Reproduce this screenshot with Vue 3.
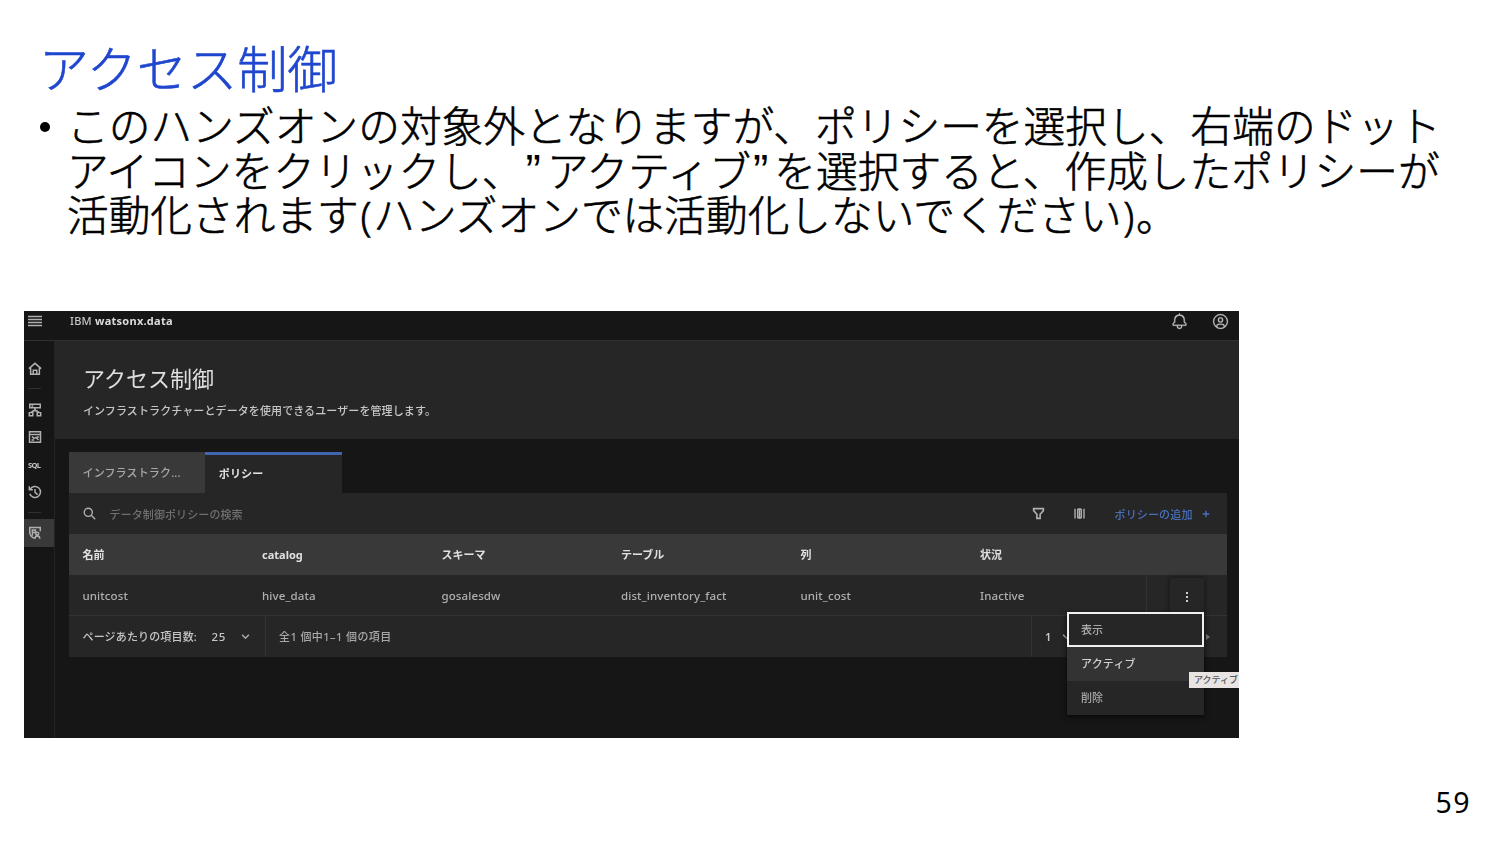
<template>
  <main class="slide">
    <h1 class="slide-title">アクセス制御</h1>
    <div class="bullet">
      <span class="dot"></span>
      <p class="bullet-text">
        <span class="line l1">このハンズオンの対象外となりますが、ポリシーを選択し、右端のドット</span>
        <span class="line l2">アイコンをクリックし、<i class="q">”</i>アクティブ<i class="q">”</i>を選択すると、作成したポリシーが</span>
        <span class="line l3">活動化されます<i class="p">(</i>ハンズオンでは活動化しないでください<i class="p">)</i>。</span>
      </p>
    </div>

    <section class="capture">
      <div class="console">
        <header class="topbar">
          <svg class="menu" viewBox="0 0 14 12"><path d="M0 1.500h14M0 4.500h14M0 7.500h14M0 10.500h14" /></svg>
          <span class="brand"><span class="ibm">IBM</span> <b>watsonx.data</b></span>
          <svg class="icon bell" viewBox="0 0 32 32"><path d="M28.7 19.3L26 16.600V13a10 10 0 0 0-9-9.950V1h-2v2.050A10 10 0 0 0 6 13v3.600l-2.700 2.700A1 1 0 0 0 3 20v3a1 1 0 0 0 1 1h7v1a5 5 0 0 0 10 0v-1h7a1 1 0 0 0 1-1v-3a1 1 0 0 0-.3-.7zM19 25a3 3 0 0 1-6 0v-1h6zm8-3H5v-1.600l2.700-2.700A1 1 0 0 0 8 17v-4a8 8 0 0 1 16 0v4a1 1 0 0 0 .3.7l2.700 2.700z" /></svg>
          <svg class="icon user" viewBox="0 0 32 32"><path fill-rule="evenodd" d="M16 8a5 5 0 1 0 5 5a5 5 0 0 0-5-5zm0 8a3 3 0 1 1 3-3a3 3 0 0 1-3 3z" /><path fill-rule="evenodd" d="M16 2a14 14 0 1 0 14 14A14 14 0 0 0 16 2zm-6 24.400V25a3 3 0 0 1 3-3h6a3 3 0 0 1 3 3v1.400a12 12 0 0 1-12 0zm14-1.500A5 5 0 0 0 19 20h-6a5 5 0 0 0-5 4.900a12 12 0 1 1 16 0z" /></svg>
        </header>

        <div class="body">
          <nav class="side">
            <span class="nav home"><svg viewBox="0 0 16 16"><path d="M1 7.500L8 1.500l7 6M3 6.500V14h10V6.500M6 14V9.500h4V14" /></svg></span>
            <span class="sep"></span>
            <span class="nav"><svg viewBox="0 0 16 16"><path d="M2 1.500h12v4H2zM4 3.500h2M8 5.500v4M8 8L3 11M8 8l5 3M5 9h6M1.500 11h4v3.500h-4zM10.500 11h4v3.500h-4z" /></svg></span>
            <span class="nav"><svg viewBox="0 0 16 16"><path d="M1.700 2h12.600v12H1.700zM2 5.200h12M4.500 7.500l2.500 2 2-1 3 3M4 11.500h3M10 8h2.500" /></svg></span>
            <span class="nav sql">SQL</span>
            <span class="nav"><svg viewBox="0 0 16 16"><path d="M2.300 5.200A6.300 6.300 0 1 1 2 10M1.500 1.500v4h4M8 4.500v4l3 2.500" /></svg></span>
            <span class="sep low"></span>
            <span class="nav active"><svg viewBox="0 0 16 16"><path d="M7.500 14.200C3 12 2 10.500 2 7V1.800h12V6M5 11V4.500h3.500v3H5M10.500 7a1.700 1.700 0 1 1 0 3.400a1.700 1.700 0 1 1 0-3.400M8 14.500c0-4 5.500-4 5.500 0" /></svg></span>
          </nav>

          <div class="content">
            <div class="page-head">
              <h2>アクセス制御</h2>
              <p>インフラストラクチャーとデータを使用できるユーザーを管理します。</p>
            </div>

            <div class="panel">
              <div class="tabs">
                <span class="tab">インフラストラク...</span>
                <span class="tab selected">ポリシー</span>
              </div>
              <div class="toolbar">
                <svg class="search" viewBox="0 0 16 16"><path d="M10.500 10.500L15 15M6.500 1.500a5 5 0 1 1 0 10a5 5 0 1 1 0-10" /></svg>
                <span class="placeholder">データ制御ポリシーの検索</span>
                <svg class="filter" viewBox="0 0 16 16"><path d="M2 2h12v2.500L10 9v5H6V9L2 4.500z" /></svg>
                <svg class="columns" viewBox="0 0 16 16"><path d="M2.500 2v12M13.500 2v12M5.800 2.500v11M10.200 2.500v11M5.800 2.500h4.400M5.800 13.500h4.400M8 2v12" /></svg>
                <span class="add">ポリシーの追加</span>
                <svg class="plus" viewBox="0 0 10 10"><path d="M5 1v8M1 5h8" /></svg>
              </div>
              <div class="row head">
                <span v-for="col in columns" :key="col">{{ col }}</span>
              </div>
              <div class="row data">
                <span v-for="cell in policy" :key="cell">{{ cell }}</span>
                <div class="actions">
                  <div class="kebab"><i></i><i></i><i></i></div>
                </div>
              </div>
              <div class="pagination">
                <div class="per-page">
                  <span class="pp-label">ページあたりの項目数:</span>
                  <span class="count">25</span>
                  <svg class="chev" viewBox="0 0 10 6"><path d="M1 1l4 4 4-4" /></svg>
                </div>
                <span class="range">全1 個中1–1 個の項目</span>
                <div class="pager">
                  <span class="page">1</span>
                  <svg class="chev" viewBox="0 0 10 6"><path d="M1 1l4 4 4-4" /></svg>
                  <svg class="next" viewBox="0 0 4 6"><path d="M0 0l4 3-4 3z" /></svg>
                </div>
              </div>
            </div>
          </div>
        </div>

        <div class="menu-list">
          <span class="item focused">表示</span>
          <span class="item hovered">アクティブ</span>
          <span class="item">削除</span>
        </div>
        <span class="tooltip">アクティブ</span>
      </div>
    </section>

    <footer class="page-number">59</footer>
  </main>
</template>

<script setup>
const columns = ['名前', 'catalog', 'スキーマ', 'テーブル', '列', '状況']
const policy = ['unitcost', 'hive_data', 'gosalesdw', 'dist_inventory_fact', 'unit_cost', 'Inactive']
</script>

<style>
body {
  margin: 0;
  background: #fff;
}
</style>

<style scoped>
* {
  box-sizing: border-box;
}

.slide {
  display: flex;
  flex-direction: column;
  width: 1500px;
  height: 844px;
  overflow: hidden;
  background: #fff;
  color: #000;
  font-family: 'Noto Sans CJK JP', sans-serif;
  text-spacing-trim: space-all;
}

.slide-title {
  margin: 36px 0 0 39px;
  height: 67px;
  font-size: 50.200px;
  line-height: 60px;
  font-weight: 300;
  color: #1f46cf;
  -webkit-text-stroke: 0.6px #1f46cf;
}

.bullet {
  display: flex;
  height: 208px;
}

.dot {
  width: 10px;
  height: 10px;
  margin: 19px 20px 0 40px;
  border-radius: 50%;
  background: #000;
}

.bullet-text {
  margin: -1px 0 0;
  font-size: 41.700px;
  line-height: 45px;
  font-weight: 300;
  white-space: nowrap;
  -webkit-text-stroke: 0.6px #000;
}

.line {
  display: block;
  margin-left: -3px;
}

.l1 {
  letter-spacing: 0.03px;
}

.l3 {
  margin-top: -1px;
}

.bullet-text i {
  display: inline-block;
  font-style: normal;
  text-align: center;
}

.q {
  width: 23.500px;
  padding-right: 4px;
  font-family: 'Liberation Sans', sans-serif;
  font-size: 46px;
  line-height: 40px;
  -webkit-text-stroke: 0;
}

.p {
  width: 14.500px;
  font-family: 'Noto Sans', sans-serif;
  font-size: 40px;
  line-height: 40px;
}

/* embedded console capture */
.capture {
  width: 1215px;
  height: 427px;
  margin-left: 24px;
  overflow: hidden;
  background: #161616;
}

.console {
  position: relative;
  width: 1215px;
  height: 427px;
  color: #c6c6c6;
  font-size: 11px;
  font-weight: 500;
  font-family: 'Noto Sans', 'Noto Sans CJK JP', sans-serif;
  filter: blur(0.5px);
}

svg {
  display: block;
  flex: none;
  fill: none;
  stroke: #b0b0b0;
  stroke-width: 1.7;
}

.topbar {
  display: flex;
  height: 30px;
  border-bottom: 1px solid #303030;
}

.menu {
  width: 14px;
  height: 12px;
  margin: 4px 28px 0 4px;
}

.brand {
  flex: 1;
  line-height: 20px;
  font-size: 11px;
  letter-spacing: 0.25px;
}

.brand b {
  color: #dcdcdc;
}

.icon {
  width: 17px;
  height: 17px;
  margin-top: 1.500px;
  fill: #c0c0c0;
  stroke: #c0c0c0;
  stroke-width: 0.5;
}

.bell {
  margin-right: 24px;
}

.user {
  margin-right: 10px;
}

.body {
  display: flex;
  height: 397px;
}

.side {
  display: flex;
  flex-direction: column;
  width: 31px;
  padding-top: 14px;
  border-right: 1px solid #232323;
}

.nav {
  display: flex;
  align-items: center;
  height: 27.300px;
  padding-left: 4px;
}

.nav svg {
  width: 14px;
  height: 14px;
}

.sql {
  padding-left: 4px;
  font-size: 7.500px;
  font-weight: 700;
  letter-spacing: -0.6px;
}

.sep {
  width: 13px;
  height: 1px;
  margin: 6px 0 7px 4px;
  background: #303030;
}

.low {
  margin: 7px 0 6px 4px;
}

.active {
  background: #393939;
}

.content {
  flex: 1;
}

.page-head {
  height: 98px;
  padding: 23px 0 0 28px;
  background: #262626;
}

.page-head h2 {
  margin: 0;
  font-size: 22px;
  line-height: 28px;
  font-weight: 400;
  color: #dedede;
}

.page-head p {
  margin: 11px 0 0;
  line-height: 16px;
  letter-spacing: 0.1px;
}

.panel {
  width: 1158px;
  margin: 13px 0 0 14px;
}

.tabs {
  display: flex;
  height: 41px;
}

.tab {
  width: 136.300px;
  padding-left: 13.500px;
  line-height: 42px;
  letter-spacing: 0.15px;
  background: #393939;
  color: #a8a8a8;
}

.selected {
  border-top: 3px solid #4066b0;
  line-height: 37px;
  background: #262626;
  color: #e0e0e0;
  font-weight: 700;
}

.toolbar {
  display: flex;
  align-items: center;
  height: 41px;
  padding-left: 13.500px;
  background: #262626;
}

.search {
  width: 13px;
  height: 13px;
}

.placeholder {
  flex: 1;
  margin-left: 14px;
  color: #6f6f6f;
  letter-spacing: 0.1px;
}

.filter,
.columns {
  width: 13px;
  height: 13px;
  margin-right: 28px;
}

.filter {
  stroke-width: 2;
}

.columns {
  margin-right: 29px;
}

.add {
  width: 87px;
  color: #4a70bc;
  letter-spacing: 0.15px;
}

.plus {
  width: 8px;
  height: 8px;
  margin-right: 17.500px;
  stroke: #4a70bc;
}

.row {
  display: flex;
  height: 41px;
  padding-left: 13.500px;
  line-height: 41.500px;
}

.row > span {
  flex: none;
  width: 179.500px;
}

.head {
  background: #393939;
  color: #e0e0e0;
  font-weight: 700;
}

.data {
  background: #262626;
  border-bottom: 1px solid #333;
  color: #b0b0b0;
  font-size: 11.500px;
  letter-spacing: 0.1px;
}

.actions {
  display: flex;
  justify-content: center;
  width: 81px;
  margin-left: -14px;
  border-left: 1px solid #333;
}

.row.data > span:nth-child(6) {
  width: 180px;
}

.kebab {
  display: flex;
  flex-direction: column;
  align-items: center;
  justify-content: center;
  gap: 2px;
  width: 34px;
  margin-top: 3px;
  box-shadow: 0 0 4px #111;
}

.kebab i {
  width: 2px;
  height: 2px;
  background: #ccc;
}

.pagination {
  display: flex;
  height: 41px;
  line-height: 42px;
  background: #262626;
}

.per-page {
  display: flex;
  align-items: center;
  width: 197px;
  padding-left: 13.500px;
  border-right: 1px solid #333;
}

.pp-label {
  width: 129px;
  letter-spacing: 0.15px;
}

.count {
  width: 29px;
  font-size: 11.500px;
  letter-spacing: 0.6px;
}

.chev {
  width: 9px;
  height: 5px;
}

.range {
  flex: 1;
  padding-left: 13px;
  color: #a8a8a8;
  letter-spacing: 0.43px;
}

.pager {
  display: flex;
  align-items: center;
  width: 196px;
  padding-left: 13px;
  border-left: 1px solid #333;
}

.page {
  font-weight: 600;
}

.pager .chev {
  margin-left: 11px;
}

.next {
  width: 4px;
  height: 6px;
  margin-left: 135px;
  fill: #777;
  stroke: none;
}

/* overflow menu over the table */
.menu-list {
  position: absolute;
  left: 1043px;
  top: 301px;
  display: flex;
  flex-direction: column;
  width: 136.500px;
  background: #262626;
  box-shadow: 0 2px 5px #080808;
}

.item {
  height: 34px;
  padding-left: 14px;
  line-height: 34.500px;
  color: #a8a8a8;
}

.focused {
  height: 35px;
  padding-left: 12px;
  line-height: 31.500px;
  border: 2px solid #f0f0f0;
}

.hovered {
  background: #333;
  color: #d0d0d0;
  letter-spacing: 0.2px;
}

.tooltip {
  position: absolute;
  left: 1165px;
  top: 361px;
  width: 60px;
  height: 16px;
  padding-left: 5px;
  line-height: 15px;
  font-size: 9px;
  background: #e8e4e4;
  color: #555;
}

.page-number {
  margin: 44px 29px 0 auto;
  font-family: 'Noto Sans', sans-serif;
  font-size: 28.500px;
  line-height: 40px;
  letter-spacing: 1.4px;
}
</style>
